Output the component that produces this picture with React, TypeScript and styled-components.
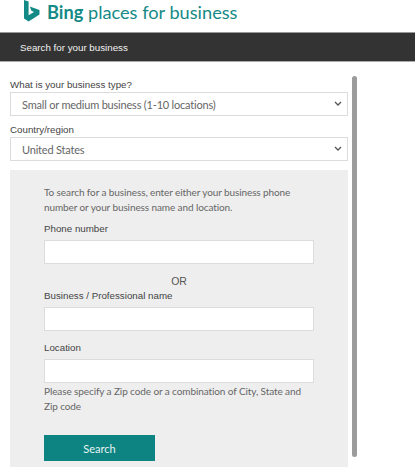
import React from "react";
import styled, { createGlobalStyle } from "styled-components";

const GlobalStyle = createGlobalStyle`
    html, body {
        margin: 0;
        padding: 0;
        background: #fff;
        overflow: hidden;
    }
    * {
        box-sizing: border-box;
    }
`;

const Page = styled.div`
    width: 415px;
    height: 472px;
    overflow: hidden;
    font-family: "Liberation Sans", Arial, sans-serif;
`;

const Header = styled.header`
    height: 32px;
    display: flex;
    align-items: flex-start;
    padding-left: 24px;
    gap: 7px;
`;

const Wordmark = styled.div`
    font-family: Lato, sans-serif;
    font-size: 18.2px;
    line-height: 24px;
    color: #148a86;
    white-space: nowrap;
    b {
        font-weight: 700;
    }
`;

const Banner = styled.div`
    height: 30px;
    background: #333;
    border-top: 1px solid #999;
    border-bottom: 1px solid #aaa;
    color: #f2f2f2;
    font-size: 9.75px;
    display: flex;
    align-items: center;
    padding-left: 20px;
`;

const Body = styled.div`
    display: flex;
    padding: 14px 0 0 10px;
    gap: 4px;
`;

const Column = styled.div`
    width: 338px;
`;

const Scrollbar = styled.div`
    width: 5px;
    height: 381px;
    border-radius: 3px;
    background: #9c9c9c;
`;

const TopLabel = styled.div`
    font-size: 9.75px;
    line-height: 15px;
    color: #444;
    margin-top: 1px;
`;

const SelectBox = styled.div`
    height: 24px;
    background: #fff;
    border: 1px solid #dcdcdc;
    display: flex;
    align-items: center;
    justify-content: space-between;
    padding: 0 5px 0 11px;
    font-family: Lato, sans-serif;
    font-size: 11px;
    letter-spacing: -0.2px;
    color: #666;
    margin-bottom: 6px;
`;

const Panel = styled.section`
    margin-top: 9px;
    height: 297px;
    background: #eee;
    padding: 15px 34px 0 34px;
`;

const Hint = styled.p`
    margin: 0;
    font-family: Lato, sans-serif;
    font-size: 10px;
    letter-spacing: -0.1px;
    line-height: 14.5px;
    color: #666;
`;

const ZipHint = styled(Hint)`
    margin-top: 1px;
`;

const FieldLabel = styled.div<{ $top?: number }>`
    font-size: 9.75px;
    line-height: 14px;
    color: #444;
    margin-top: ${(p) => p.$top ?? 0}px;
`;

const TextInput = styled.div`
    height: 24px;
    background: #fff;
    border: 1px solid #dcdcdc;
    margin-top: 4px;
`;

const Or = styled.div`
    text-align: center;
    font-size: 10.5px;
    line-height: 14px;
    color: #555;
    margin: 10px 0 1px;
`;

const SearchButton = styled.button`
    display: block;
    width: 111px;
    height: 26px;
    margin-top: 22px;
    border: 0;
    background: #0d8481;
    color: #e8f5f4;
    font-family: Lato, sans-serif;
    font-size: 11px;
`;

const BingMark = () => (
    <svg width="16" height="22" viewBox="0 0 16 22">
        <path d="M0 0 L4.6 1.5 V15.2 L10 12 L7.4 10.8 L5.8 6.6 L15.5 10 V14.6 L4.6 21.5 L0 18.6 Z" fill="#148a86" />
    </svg>
);

const Chevron = () => (
    <svg width="8" height="6" viewBox="0 0 8 6">
        <path d="M1 1 L4 4 L7 1" fill="none" stroke="#555" strokeWidth="1.3" />
    </svg>
);

export default function App() {
    return (
        <Page>
            <GlobalStyle />
            <Header>
                <BingMark />
                <Wordmark><b>Bing</b> places for business</Wordmark>
            </Header>
            <Banner>Search for your business</Banner>
            <Body>
                <Column>
                    <TopLabel>What is your business type?</TopLabel>
                    <SelectBox>Small or medium business (1-10 locations)<Chevron /></SelectBox>
                    <TopLabel>Country/region</TopLabel>
                    <SelectBox>United States<Chevron /></SelectBox>
                    <Panel>
                        <Hint>To search for a business, enter either your business phone number or your business name and location.</Hint>
                        <FieldLabel $top={8}>Phone number</FieldLabel>
                        <TextInput />
                        <Or>OR</Or>
                        <FieldLabel>Business / Professional name</FieldLabel>
                        <TextInput />
                        <FieldLabel $top={10}>Location</FieldLabel>
                        <TextInput />
                        <ZipHint>Please specify a Zip code or a combination of City, State and Zip code</ZipHint>
                        <SearchButton>Search</SearchButton>
                    </Panel>
                </Column>
                <Scrollbar />
            </Body>
        </Page>
    );
}
